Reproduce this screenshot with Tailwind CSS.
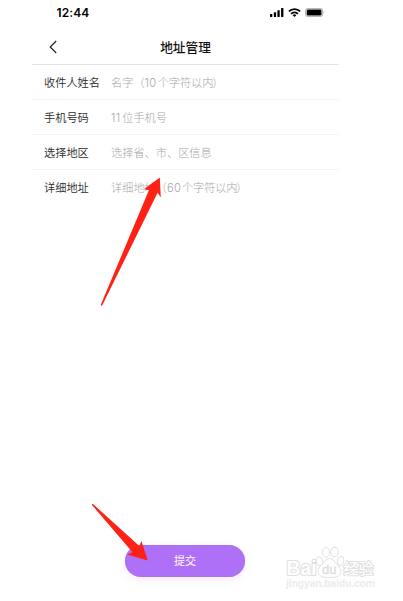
<!DOCTYPE html>
<html lang="zh-CN">
<head>
<meta charset="utf-8">
<title>地址管理</title>
<script src="https://cdn.jsdelivr.net/npm/@tailwindcss/browser@4"></script>
</head>
<body class="bg-white">
<div class="relative w-[403px] h-[601px] overflow-hidden bg-white font-['Inter','Noto_Sans_CJK_SC',sans-serif]">
  <main class="ml-8 flex h-[601px] w-[307px] flex-col">
    <!-- status bar -->
    <div class="flex h-[25px] items-center justify-between pl-[24.5px] pr-[14px]">
      <span class="text-[12px] leading-[25px] font-semibold tracking-[0.1px] text-black">12:44</span>
      <div class="flex items-center gap-[4px]">
        <svg class="h-[9px] w-[14px]" viewBox="0 0 14 9"><rect x="0" y="6" width="2.3" height="3" rx=".5"/><rect x="3.8" y="4.3" width="2.3" height="4.7" rx=".5"/><rect x="7.4" y="2.3" width="2.3" height="6.7" rx=".5"/><rect x="11.1" y="0" width="2.3" height="9" rx=".5"/></svg>
        <svg class="h-[9px] w-[13px]" viewBox="0 0 13 9" fill="none" stroke="#000" stroke-width="1.9"><path d="M.9 3.4a8 8 0 0 1 11.2 0M3.1 5.9a4.9 4.9 0 0 1 6.8 0"/><path d="M6.5 9 4.7 7.2a2.6 2.6 0 0 1 3.6 0z" fill="#000" stroke="none"/></svg>
        <svg class="h-[9px] w-[20px]" viewBox="0 0 20 9"><rect x=".5" y=".4" width="17.2" height="8.2" rx="2.4" fill="#fff" stroke="#a5a5a5" stroke-width=".9"/><rect x="1.7" y="1.5" width="14.8" height="6" rx="1.3"/><path d="M18.7 3.2q1.2 1.3 0 2.6z" fill="#a5a5a5"/></svg>
      </div>
    </div>
    <!-- title bar -->
    <header class="grid h-10 grid-cols-[40px_1fr_40px] items-center border-b border-[#e6e6e6] pb-[1px]">
      <svg class="mt-[6px] ml-[17px] h-[14px] w-[8px]" viewBox="0 0 8 14" fill="none" stroke="#222" stroke-width="1.2"><path d="M7.2 1 1.2 7l6 6"/></svg>
      <h1 class="mt-[7px] text-center text-[12.7px] leading-5 font-medium text-[#111]">地址管理</h1>
    </header>
    <!-- form -->
    <div class="flex flex-col text-[11.2px] text-[#2b2b2b]">
      <div class="flex h-[35px] items-center border-b border-[#f4f4f4] pl-3 pt-[2px]"><span class="w-[67px] font-[350]">收件人姓名</span><span class="flex font-light text-[#a6a6a6]"><span class="w-[33.6px]">名字（</span><span class="w-[13.2px] tracking-[0.2px]">10</span><span class="tracking-[-0.1px]">个字符以<span class="tracking-[-1.2px]">内</span>）</span></span></div>
      <div class="flex h-[35px] items-center border-b border-[#f4f4f4] pl-3 pt-[2px]"><span class="w-[67px] font-[350]">手机号码</span><span class="flex font-light text-[#a6a6a6]"><span class="w-[11.2px] tracking-[0.4px]">11</span><span>位手机号</span></span></div>
      <div class="flex h-[35px] items-center border-b border-[#f4f4f4] pl-3 pt-[2px]"><span class="w-[67px] font-[350]">选择地区</span><span class="font-light text-[#a6a6a6]">选择省、市、区信息</span></div>
      <div class="flex h-[35px] items-center pl-3 pt-[1px]"><span class="w-[67px] font-[350]">详细地址</span><span class="flex font-light text-[#a6a6a6]"><span class="w-[56px]">详细地址（</span><span class="w-[15px] tracking-[0.2px]">60</span><span class="tracking-[-0.1px]">个字符以<span class="tracking-[-1.2px]">内</span>）</span></span></div>
    </div>
    <button class="mt-auto mb-6 mr-[1px] flex h-8 w-[120px] items-center justify-center self-center rounded-full bg-[#ae70f7] text-[11px] text-white shadow-[0_3px_8px_#ae70f722,inset_0_0_1px_#9860d8]">提交</button>
  </main>

  <!-- pointer arrows over the form -->
  <svg class="pointer-events-none absolute inset-0 h-[601px] w-[403px]" viewBox="0 0 403 601" fill="#ff2116">
    <path d="M159.8 177.5 143.8 189.2 149 190 100.8 304.8Q101 306.5 102.3 305.3L157.6 192.7 160.8 197.2Z"/>
    <path d="M147.8 560.5 141.4 541 139.3 546 93 504Q91.5 503.5 92 505L132.5 552.2 127.2 554.5Z"/>
  </svg>

  <!-- watermark -->
  <svg class="pointer-events-none absolute left-[283px] top-[543px] h-[50px] w-[96px]" viewBox="0 0 96 50" font-family="'Liberation Sans','Noto Sans CJK SC',sans-serif">
    <g fill="#fff" stroke="#e0e0e0" stroke-width="1">
      <text x="3.5" y="32" font-size="20" font-weight="bold" stroke-width="2" paint-order="stroke" textLength="30" lengthAdjust="spacingAndGlyphs">Bai</text>
      <ellipse cx="36.4" cy="18.2" rx="3.2" ry="4.4" transform="rotate(-12 36.4 18.2)"/>
      <ellipse cx="43" cy="9.3" rx="3.6" ry="4.8"/>
      <ellipse cx="51.5" cy="9" rx="3.6" ry="4.8" transform="rotate(8 51.5 9)"/>
      <ellipse cx="57.6" cy="18" rx="3.2" ry="4.6" transform="rotate(12 57.6 18)"/>
      <path d="M46.5 15.5c3.8 0 5.3 3.6 7.8 6.2 3 3.1 4.5 5.6 3 9-1.8 4.1-6.6 3.7-10.8 3.7s-9 .4-10.8-3.7c-1.5-3.4 0-5.9 3-9 2.5-2.6 4-6.2 7.8-6.2z"/>
    </g>
    <text x="39" y="31" font-size="13" fill="#e4e4e4" stroke="#dadada" stroke-width=".4" textLength="14.5" lengthAdjust="spacingAndGlyphs">du</text>
    <text x="60.5" y="30.5" font-size="15" font-weight="500" fill="#fff" stroke="#dedede" stroke-width="1.8" paint-order="stroke" font-family="'Noto Sans CJK SC',sans-serif">经验</text>
    <text x="3" y="43.5" font-size="10" font-weight="bold" fill="#ebebeb" textLength="89" lengthAdjust="spacingAndGlyphs">jingyan.baidu.com</text>
  </svg>
</div>
</body>
</html>
